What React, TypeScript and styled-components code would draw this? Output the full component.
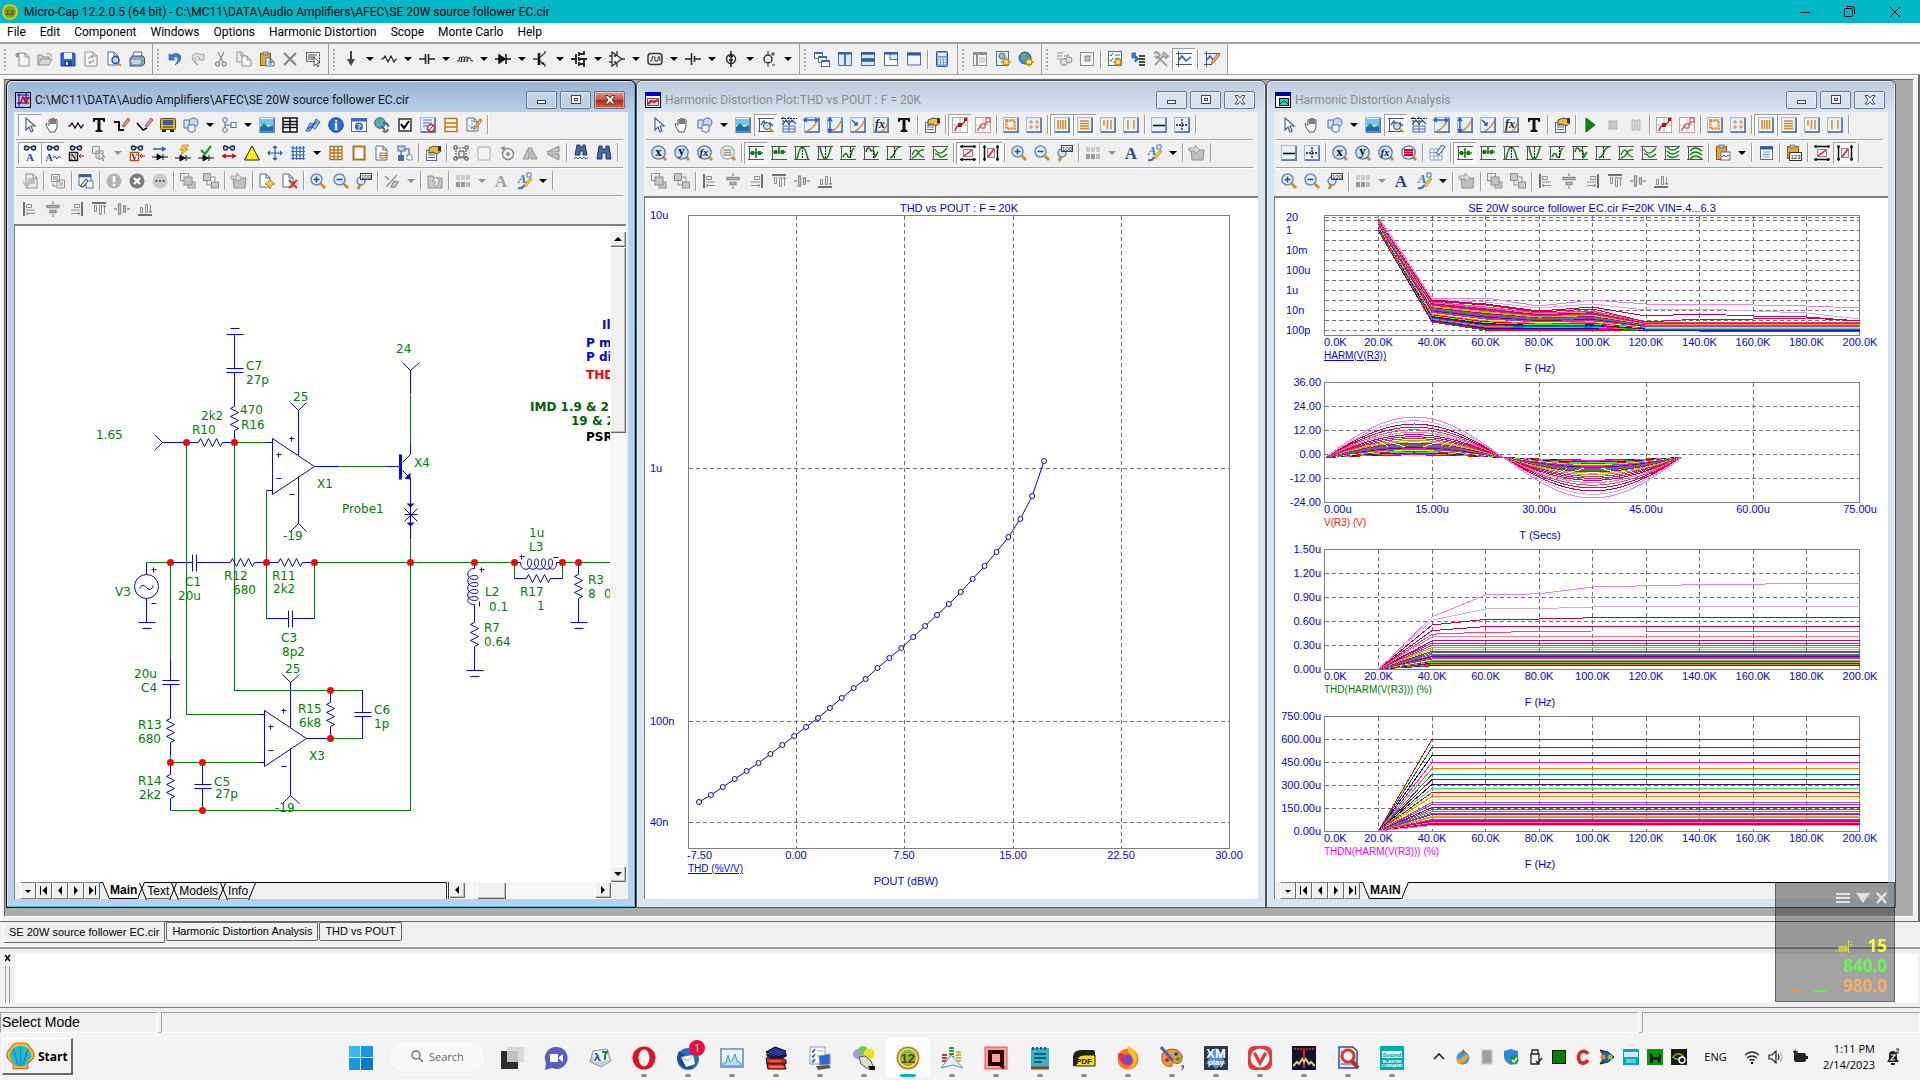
import React from "react";
import styled, { createGlobalStyle, css } from "styled-components";

const UI = 'Roboto, "Open Sans", sans-serif';
const TASK = '"Open Sans", "Noto Sans", sans-serif';
const ARIAL = '"Liberation Sans", Arial, sans-serif';
const TAHOMA = '"DejaVu Sans", Verdana, sans-serif';

const Global = createGlobalStyle`
  * { box-sizing: border-box; }
  html, body { margin: 0; height: 100%; overflow: hidden; }
  body { background: #f0f0f0; font-family: ${UI}; font-size: 12px; color: #000; }
  button { font: inherit; color: inherit; padding: 0; margin: 0; border: 0; background: none; }
  svg { display: block; flex: none; }
`;

/* ---------- toolbar glyphs, 16 x 16 ---------- */

const G = "#909090";
const B = "#4a6ea0";
const O = "#e08a1e";

const page = (x = 2, y = 1, w = 11, h = 14, c = B, f = "#fff") => (
  <path d={`M${x} ${y}h${w - 4}l4 4v${h - 4}h-${w}z M${x + w - 4} ${y}v4h4`} fill={f} stroke={c} />
);
const frame = (
  <>
    <rect x="0.5" y="0.5" width="15" height="15" fill="#e8f1fb" stroke="#9fb8d8" />
    <path d="M15 1v14H1" fill="none" stroke="#4a6a9a" strokeWidth="1.500" />
  </>
);
const tick = <path d="M0 1.500h16M0 14.500h16M1.500 1v14" stroke="#555" fill="none" />;
const glasses = (
  <g fill="none" stroke="#203050" strokeWidth="1.4">
    <circle cx="4.5" cy="3" r="2" fill="#c8d8f0" />
    <circle cx="11.5" cy="3" r="2" fill="#c8d8f0" />
    <path d="M6.5 2.5h3M2 2l2-1M14 2l-2-1" />
  </g>
);
const lens = (fill = "#cfe2f8", edge = "#5a7db0") => (
  <>
    <path d="M12 12l3 3" stroke="#d08a20" strokeWidth="3" />
    <circle cx="7.500" cy="7.500" r="6.700" fill={fill} stroke={edge} strokeWidth="1.300" />
  </>
);
const mid = (t: string, x: number, y: number, s: number, fill: string, extra = {}) => (
  <text x={x} y={y} fontSize={s} fill={fill} textAnchor="middle" fontFamily="Liberation Serif" fontWeight="bold" {...extra}>{t}</text>
);
const gear = (x: number, y: number) => (
  <g transform={`translate(${x} ${y})`}>
    <path d="M0-4.5V4.5M-4.5 0H4.5M-3-3L3 3M-3 3L3-3" stroke="#c89210" strokeWidth="2" />
    <circle r="3" fill="#f8cf40" stroke="#b98a10" />
    <circle r="1" fill="#fff" />
  </g>
);
const pen = <path d="M8 10l6-8 2 1.500-6 8-2.500 1z" fill="#f0b060" stroke="#a05020" strokeWidth=".8" />;
const zoomGlass = (d: string) => (
  <>
    <path d="M11 11l4 4" stroke="#d08a20" strokeWidth="3" />
    <circle cx="6.500" cy="6.500" r="5.500" fill="#e4effc" stroke="#6a8cbc" strokeWidth="1.500" />
    <path d={d} stroke="#24508c" strokeWidth="1.600" />
  </>
);

const glyphs: Record<string, React.ReactNode> = {
  new: <><path d="M1 4h5M3.500 1.500v5M2 2l3 4M5 2l-3 4" stroke={G} />{page(5, 2, 10, 13, G, "#f4f4f4")}</>,
  open: <><path d="M1 14V4h4l1 2h6v3" fill="#ccc" stroke={G} /><path d="M1 14l3-6h11l-3 6z" fill="#d8d8d8" stroke={G} /><path d="M9 3q3-2 5 1v2" fill="none" stroke={G} /></>,
  save: <><path d="M1 2h13l1 1v12H1z" fill="#3a66d8" stroke="#1c3c9c" /><rect x="4" y="2" width="8" height="6" fill="#eef4ff" /><rect x="4.500" y="10" width="7" height="5" fill="#1c3c9c" /><rect x="6" y="11" width="2" height="3" fill="#fff" /></>,
  revert: <>{page(2, 1, 12, 14, G, "#f6f6f6")}<path d="M5 8q1-3 5-2l-1-2M11 9q-1 3-5 2l1 2" stroke="#777" fill="none" /></>,
  preview: <>{page(2, 1, 10, 13)}<circle cx="9.500" cy="9" r="3.500" fill="#bcd8f8" stroke="#27508c" strokeWidth="1.500" /><path d="M12 12l3 3" stroke={O} strokeWidth="2" /></>,
  print: <><path d="M5 1h8l-1 6H3z" fill="#fff" stroke="#567" /><path d="M1 7l3-2h10l1.500 2v6l-3 2H1z" fill="#8ea4bd" stroke="#3b5270" /><path d="M2 10h10M3 12h8" stroke="#fff" /><rect x="12" y="9" width="2" height="2" fill="#30c030" /></>,
  undo: <path d="M2 3v6h6L6 7q4-3 5 1 0 3-3 6 6-3 6-8-2-6-10-2z" fill="#3f7ad0" stroke="#2558a8" strokeWidth=".6" />,
  redo: <path d="M14 3v6H8l2-2Q6 4 5 8q0 3 3 6-6-3-6-8 2-6 10-2z" fill="#e4e4e4" stroke={G} strokeWidth=".8" />,
  cut: <g stroke={G} fill="none" strokeWidth="1.300"><path d="M5 1l5 10M11 1L6 11" /><circle cx="4.500" cy="13" r="2" /><circle cx="11" cy="13" r="2" /></g>,
  copy: <>{page(1, 1, 8, 10, G, "#eee")}{page(6, 5, 9, 10, G, "#f6f6f6")}</>,
  paste: <><rect x="1.500" y="2.500" width="10" height="12" fill="#e0a83c" stroke="#8a5a10" /><rect x="4" y="1" width="5" height="3" fill="#bbb" stroke="#666" strokeWidth=".7" />{page(7, 7, 8, 8, B)}<path d="M9 11h4M9 13h4" stroke={B} /></>,
  del: <path d="M2 2l12 12M14 2L2 14" stroke="#858585" strokeWidth="2.200" />,
  selall: <><path d="M1.500 1.500h13v9h-13z" fill="none" stroke="#333" strokeDasharray="2 1" /><path d="M3 4h9M3 6h7M3 8h7" stroke="#555" /><path d="M9 6v9l2-2 2 3 1-1-2-3h3z" fill="#fff" stroke="#335" strokeWidth=".8" /></>,
  ground: <><path d="M8 0v10" stroke="#444" strokeWidth="2" /><path d="M4 8h8l-4 7z" fill="#444" /></>,
  res: <path d="M0 8h2l2-3 3 6 3-6 3 6 2-3h1" fill="none" stroke="#222" strokeWidth="1.200" />,
  cap: <path d="M0 8h6M10 8h6M6.500 3v10M9.500 3v10" stroke="#222" strokeWidth="1.600" />,
  ind: <path d="M0 10h2q0-5 2-4 2 1 0 5 0-6 3-5 2 1 0 5 0-6 3-5 2 1 0 5 0-6 3-4 1 1 1 3h2" fill="none" stroke="#222" />,
  diode: <path d="M0 8h16M4 4v8l6-4zM11 3v10" fill="#111" stroke="#111" strokeWidth="1.500" />,
  npn: <><path d="M0 8h6M6 7l6-5V0M6 9l6 5v2" fill="none" stroke="#444" strokeWidth="1.300" /><path d="M6 2v12" stroke="#111" strokeWidth="2.500" /><path d="M12 14l-4-1 2-2z" /></>,
  mos: <path d="M0 8h5M5 3v10M8 1v4M8 6v4M8 11v4M8 3h5V0M8 13h5v3M8 8h8M13 8v5" stroke="#222" fill="none" strokeWidth="1.800" />,
  opamp: <path d="M3 1v14l10-7zM0 5h3M0 11h3M13 8h3M8 0v4M8 12v4M5 5h2M6 4v2M5 11h2" fill="none" stroke="#333" strokeWidth="1.300" />,
  pulse: <><rect x="1" y="2.500" width="14" height="11" rx="3" fill="none" stroke="#333" strokeWidth="1.500" /><path d="M3 10h2V6h3v4h3V6h2v4" fill="none" stroke="#333" /></>,
  batt: <path d="M0 8h6M10 8h6M6.500 2v12M9.500 5v6" stroke="#222" strokeWidth="1.500" />,
  isrc: <><circle cx="8" cy="8" r="4.500" fill="none" stroke="#333" strokeWidth="1.500" /><path d="M8 0v16M6 6l2-2 2 2M6 9h4" stroke="#222" fill="none" strokeWidth="1.500" /></>,
  vdep: <><circle cx="7" cy="8" r="4" fill="none" stroke="#333" strokeWidth="1.500" /><path d="M7 0v4M7 12v4M12 1v4M10 3h4M11 14h3" stroke="#333" /></>,
  cascade: <>{[[0, 1], [4, 5], [7, 9]].map(([x, y]) => <g key={x}><rect x={x + .5} y={y + .5} width="8" height="6" fill="#fff" stroke={B} /><path d={`M${x} ${y + 1}h9`} stroke="#3868b8" strokeWidth="2" /></g>)}</>,
  tilev: <><path d="M1.500 1.500h6v13h-6zM8.500 1.500h6v13h-6z" fill="#dce9fa" stroke={B} /><path d="M1 2.500h14" stroke="#2a5cb0" strokeWidth="2" /></>,
  tileh: <><path d="M1.500 1.500h13v6h-13zM1.500 8.500h13v6h-13z" fill="#dce9fa" stroke={B} /><path d="M1 2.500h14M1 9.500h14" stroke="#2a5cb0" strokeWidth="2.500" /></>,
  overlap: <><path d="M1.500 1.500h13v13h-13z" fill="#fff" stroke={B} /><path d="M7 1.500h7.500v7H7z" fill="#dce9fa" stroke={B} /><path d="M1 2.500h14" stroke="#2a5cb0" strokeWidth="2" /></>,
  maxi: <><path d="M1.500 2h13v12h-13z" fill="#eef5ff" stroke={B} /><path d="M1 3h14" stroke="#2a5cb0" strokeWidth="3" /></>,
  calc: <><rect x="2.500" y=".5" width="11" height="15" rx="1" fill="#7ba0e0" stroke="#355a98" /><rect x="4" y="2" width="8" height="3" fill="#e8f2ff" /><path d="M4 7.500h8M4 10h8M4 12.500h8" stroke="#fff" strokeWidth="1.500" strokeDasharray="2 1" /></>,
  panel: <><rect x="1.500" y="1.500" width="13" height="13" fill="#f4f4f4" stroke={G} /><path d="M2 3h12M5 4v11" stroke={G} strokeWidth="2" /><path d="M7 7h6M7 9h6M7 11h6" stroke="#bbb" /></>,
  lockgear: <><rect x="1.500" y=".5" width="12" height="14" fill="#e4ecf8" stroke={B} /><circle cx="7" cy="5" r="3" fill="#9ab8e0" stroke={B} />{gear(11, 11)}</>,
  globegear: <><circle cx="7" cy="7" r="6" fill="#3c8cd8" stroke="#1f5a98" /><path d="M3 4q4-4 6 0l-2 4-3 1zM9 8h3l-2 4z" fill="#58b848" />{gear(11, 11)}</>,
  run1: <><path d="M1 2h6M1 5h5M1 8h4M8 5h5l-2-2" stroke={G} fill="none" /><circle cx="8" cy="11" r="3.500" fill="#ddd" stroke={G} /><circle cx="13" cy="9" r="3" fill="#ddd" stroke={G} /></>,
  run2: <><rect x="1.500" y="1.500" width="13" height="13" fill="#f6f6f6" stroke={G} /><rect x="6" y="5" width="5" height="5" fill="#bbb" stroke={G} /></>,
  checkgear: <><rect x="1.500" y=".5" width="13" height="14" fill="#fff" stroke={B} /><path d="M3 4l1 1 2-3M3 9l1 1 2-3M8 4h5M8 8h5" stroke="#2a5cb0" fill="none" />{gear(11, 11)}</>,
  step: <><path d="M6 2H2v5h4l-1-3 4 4-4 3V9" fill="#3f7ad0" stroke="#2558a8" strokeWidth=".8" /><path d="M9 5h6M9 8h6M9 11h6M9 14h6" stroke="#111" strokeWidth="1.300" /></>,
  tools: <g fill="none" stroke={G} strokeWidth="1.600"><path d="M5 6l9 9M10 5l-8 9" /><path d="M1 2l3-1 3 3-3 3-2-2M10 1l5 4-2 2-4-4" fill="#ddd" /></g>,
  plotwin: <><path d="M2.500 0v16M0 2.500h16M0 13.500h16" stroke="#555" /><path d="M3 9l3-4 4 5 5-4" fill="none" stroke="#2a5cd0" strokeWidth="1.600" /></>,
  plotedit: <><path d="M2.500 0v16M0 2.500h16M0 13.500h8" stroke="#555" /><path d="M3 9l3-4 4 5" fill="none" stroke="#2a5cd0" strokeWidth="1.600" />{pen}</>,
  arrow: <path d="M4 1v12l3-3 2 5 2-1-2-5h4z" fill="#fff" stroke="#45628c" strokeWidth="1.200" />,
  hand: <path d="M5 15l-3-5-1-3 1-.500 2 2V3q1-1 2 0v4-5q1-1 2 0v5-5q1-1 2 0v5-4q1-1 2 0v7l-2 5z" fill="#fff" stroke="#555" />,
  wave: <path d="M0 9h2l2-3 3 5 3-5 3 5 2-3h1" fill="none" stroke="#000" strokeWidth="1.200" />,
  T: <path d="M2 1h12v4h-1.500l-1-2H9.500v9.500l2 1V15H4.500v-1.500l2-1V3H4.500l-1 2H2z" fill="#111" />,
  wireo: <><path d="M0 5h5v8h5" fill="none" stroke="#111" strokeWidth="2" /><path d="M8 9l6-8 2 2-6 7z" fill="#f0a080" stroke="#803010" strokeWidth=".8" /></>,
  wired: <><path d="M0 6l6 7 4-2" fill="none" stroke="#111" strokeWidth="1.600" /><path d="M8 9l6-8 2 2-6 7z" fill="#f0a080" stroke="#803010" strokeWidth=".8" /></>,
  bus: <><rect x=".5" y="1.500" width="15" height="11" rx="1" fill="#e8ae20" stroke="#6b4a08" /><rect x="3" y="3" width="10" height="5" fill="#3a5a88" /><path d="M3 10h10" stroke="#333" /><path d="M2 13h4v2H2zM10 13h4v2h-4z" fill="#222" /></>,
  shapes: <><path d="M1 3h8v8H1z" fill="#d6e6fa" stroke={B} /><circle cx="10.500" cy="5.500" r="4.500" fill="#c2d8f6" stroke={B} /><path d="M5 8h7v6l-3 1.500-4-1.500z" fill="#eef5ff" stroke={B} /></>,
  tree: <><path d="M4 4v9M4 8h6M4 13h2" stroke={B} fill="none" /><circle cx="4" cy="3" r="2.300" fill="#fff" stroke={B} /><circle cx="4" cy="13" r="2.300" fill="#fff" stroke={B} /><rect x="10" y="5.500" width="5" height="5" fill="#fff" stroke={B} /></>,
  pic: <>{frame}<rect x="1" y="2" width="13" height="6" fill="#7ac0f4" /><path d="M1 10l4-4 4 4 5-2v6H1z" fill="#1f8a6a" /><path d="M1 11q6-2 13 0v3H1z" fill="#1c6cc0" /></>,
  tblk: <path d="M1 1h14v14H1zM1 4.500h14M1 7.500h14M1 10.500h14M8 1v14" fill="#fff" stroke="#111" strokeWidth="1.500" />,
  link: <><path d="M1 14l4-8 4 1-4 7zM7 10l4-8 4 3-5 7z" fill="#9cc0f0" stroke="#2a5cb0" /><path d="M3 12l9-7" stroke="#2a5cb0" strokeWidth="1.500" /></>,
  info: <><circle cx="8" cy="8" r="7.300" fill="#2a6ad4" stroke="#174a9c" />{mid("i", 8, 13, 14, "#fff")}</>,
  help: <><rect x=".5" y="1.500" width="15" height="13" fill="#fff" stroke={B} /><path d="M0 3h16" stroke="#3a6fc8" strokeWidth="3" /><circle cx="8" cy="9.500" r="4" fill="#2a6ad4" />{mid("?", 8, 12.500, 9, "#fff")}</>,
  web: <><circle cx="6" cy="6" r="5.300" fill="#58a8e8" stroke="#2a6098" /><path d="M3 3q4-3 5 1l-3 4z" fill="#58b848" /><path d="M7 9l4 4M9 7a3 3 0 015 3M14 12a3 3 0 01-5 2" fill="none" stroke="#4a6a6a" strokeWidth="2" /></>,
  check: <><rect x="2" y="2" width="12" height="12" fill="#fff" stroke="#333" strokeWidth="1.500" /><path d="M4 7l3 4 5-7" fill="none" stroke="#000" strokeWidth="2" /></>,
  listno: <>{frame}<path d="M3 3h9M3 6h9M3 9h4" stroke={B} /><circle cx="11" cy="11" r="3.500" fill="#fff" stroke="#d02020" strokeWidth="1.500" /><path d="M9 13l4-4" stroke="#d02020" /></>,
  rows: <path d="M2 1.500h12v13H2zM2 6h12M2 10h12" fill="#fff8ec" stroke="#c07818" strokeWidth="1.500" />,
  pagepen: <>{page(1, 1, 11, 13)}<path d="M6 3v8M3 8l3 4 3-4" fill="none" stroke="#3a6fc8" strokeDasharray="2 1" />{pen}</>,
  specA: <>{glasses}{mid("A", 8, 15.500, 11, "#2348a0")}</>,
  specW: <>{glasses}{mid("A", 4, 15.500, 10, "#2348a0")}<path d="M8 13l2-2 2 3 2-3 2 2" fill="none" stroke="#2348a0" /></>,
  specN: <>{glasses}<rect x="1.500" y="7.500" width="8" height="8" fill="#fff" stroke="#111" strokeWidth="1.400" />{mid("N", 5.500, 14.500, 8, "#111")}<path d="M11 11h5M11 11l2-2M11 11l2 2" stroke="#d00" /></>,
  specV: <>{glasses}<rect x="1.500" y="7.500" width="8" height="8" fill="#fff" stroke="#d04000" strokeWidth="1.400" />{mid("V", 5.500, 14.500, 8, "#111")}<path d="M11 11h5M11 11l2-2M11 11l2 2" stroke="#d00" /></>,
  copycond: <><path d="M1.500 1.500h7v7h-7zM5 6h7v7H5z" fill="#e8e8e8" stroke={G} /><path d="M8 7v8l2-2 2 3 1-1-2-3h3z" fill="#eee" stroke={G} /></>,
  curr: <><path d="M1 4h12M10 2l3 2-3 2" stroke="#2a5cb0" fill="none" strokeWidth="1.500" /><path d="M0 12h16M5 9v6l5-3zM11 9v6" fill="#111" stroke="#111" /></>,
  power: <><path d="M8 0l6 0-4 4h3l-7 6 2-5H5z" fill="#f8c830" stroke="#b08010" strokeWidth=".7" /><path d="M0 13h16M5 10v6l5-3zM11 10v6" fill="#111" stroke="#111" /></>,
  ok: <><path d="M3 5l4 4 6-8" fill="none" stroke="#18a028" strokeWidth="2.200" /><path d="M0 13h16M5 10v6l5-3zM11 10v6" fill="#111" stroke="#111" /></>,
  pinconn: <>{glasses}<path d="M1 11h14M5 9l-3 2 3 2M11 9l3 2-3 2" fill="none" stroke="#d00018" strokeWidth="1.500" /></>,
  warn: <path d="M8 1l7.500 14H.5z" fill="#ffee00" stroke="#222" />,
  cross4: <path d="M8 1v14M1 8h14M6 3l2-2 2 2M6 13l2 2 2-2M3 6L1 8l2 2M13 6l2 2-2 2" fill="none" stroke="#2f5a98" strokeWidth="1.200" />,
  grid: <path d="M3 1v14M6.500 1v14M10 1v14M13.500 1v14M1 3h14M1 6.500h14M1 10h14M1 13.500h14" stroke="#2f6ac8" strokeWidth="1.200" />,
  table: <path d="M2 1.500h12v13H2zM2 5h12M2 8h12M2 11.500h12M6 1.500v13M10 1.500v13" fill="#fff" stroke="#b87018" strokeWidth="1.300" />,
  pageo: <path d="M2.500 1.500h11v13h-11z" fill="#fff" stroke="#b87018" strokeWidth="2" />,
  pageb: <>{page(2, 1, 11, 14)}<path d="M6 8h6v5H6zM6 10.500h6" fill="#fff4e0" stroke="#b87018" /></>,
  schem: <><path d="M4 4v8M4 4h8v8" fill="none" stroke="#5a86cc" strokeWidth="1.500" /><rect x="1" y="1" width="7" height="5" fill="#b8d0f4" stroke={B} /><rect x="1.500" y="10.500" width="5" height="5" fill="#3a6fc8" stroke={B} /><rect x="10" y="10" width="5" height="5" fill="#fff" stroke={B} strokeDasharray="2 1" /></>,
  prop: <><rect x="1.500" y="5.500" width="10" height="10" fill="#fff" stroke={B} /><path d="M3 8h7M3 10h7M3 12.500h7" stroke={B} /><path d="M4 3l5-2 5 1 2 4-4 3-4-2-4 1z" fill="#e8b848" stroke="#6b4a08" /><path d="M13 1h3v5h-3z" fill="#333" /></>,
  group: <><path d="M3 3h10v10H3z" fill="none" stroke="#444" strokeDasharray="2 1" /><path d="M1 1h3v3H1zM12 1h3v3h-3zM1 12h3v3H1zM12 12h3v3h-3zM6 6h5v6H6z" fill="#eee" stroke="#444" /></>,
  rrect: <rect x="2" y="2" width="12" height="13" rx="2" fill="#f2f2f2" stroke="#c0c0c0" strokeWidth="1.500" />,
  rot: <><circle cx="9" cy="9" r="5.500" fill="none" stroke={G} strokeWidth="1.600" /><circle cx="9" cy="9" r="2" fill={G} /><path d="M1 3l5-2v5z" fill={G} /></>,
  flipx: <path d="M7 2v12H1zM9 2v12h6z" fill="#c4c4c4" stroke={G} />,
  flipy: <path d="M14 7H2l12-6zM14 9H2l12 6z" fill="#c4c4c4" stroke={G} />,
  bino: <path d="M3 1h3v3h4V1h3l2 13h-5V8H6v6H1z" fill="#4868a8" stroke="#1c3468" />,
  binow: <><path d="M4 0h3v2h3V0h2l2 10h-4V6H7v4H2z" fill="#4868a8" stroke="#1c3468" /><path d="M1 14l2-2 2 2 2-2 2 2 2-2 2 2 2-2" fill="none" stroke="#2a5cd0" /></>,
  filefwd: <>{page(4, 1, 11, 14, G, "#eee")}<path d="M6 6h7M6 8h7M6 10h7" stroke={G} /><path d="M1 6q0 5 4 5V9l3 3-3 3v-2Q0 13 1 6z" fill="#bbb" /></>,
  copy2: <><path d="M1.500 1.500h8v7h-8zM7 7h7.500v8H7z" fill="#eee" stroke={G} /><path d="M3 4h5M3 6h5M9 10h4M9 12h4M3 10v3h3" stroke={G} fill="none" /></>,
  editpage: <><rect x="1" y="1.500" width="12" height="11" fill="#fff" stroke={B} /><path d="M1 3h12" stroke="#2a5cb0" strokeWidth="2.500" /><path d="M8 8h7v7H8z" fill="#fff" stroke={B} /><path d="M3 12l5-6 2 2-5 6H3z" fill="#eea" stroke="#236" /></>,
  bang: <><circle cx="8" cy="8" r="7.500" fill="#b4b4b4" /><path d="M8 3v6" stroke="#fff" strokeWidth="2.500" /><circle cx="8" cy="12" r="1.400" fill="#fff" /></>,
  xcirc: <><circle cx="8" cy="8" r="7.500" fill="#7c7c7c" /><path d="M5 5l6 6M11 5l-6 6" stroke="#fff" strokeWidth="2.300" /></>,
  dots: <><circle cx="8" cy="8" r="7.500" fill="#cacaca" /><path d="M3.500 8h9" stroke="#666" strokeWidth="2" strokeDasharray="2 1.500" /></>,
  front: <><rect x=".5" y=".5" width="8" height="7" fill="#ececec" stroke={G} /><rect x="8" y="9" width="7" height="6" fill="#ccc" stroke={G} /><rect x="4" y="4" width="8" height="8" fill="#c4c4c4" stroke={G} /></>,
  back: <><rect x="4" y="4" width="8" height="8" fill="#ececec" stroke={G} /><rect x=".5" y=".5" width="7" height="7" fill="#c8c8c8" stroke={G} /><rect x="8.500" y="9" width="7" height="6" fill="#c8c8c8" stroke={G} /></>,
  goto: <><path d="M2 5h13l-1 10H3z" fill="#c0c0c0" stroke={G} /><path d="M0 3h6V0l5 5-5 4V6H0z" fill="#ddd" stroke={G} strokeWidth=".8" /></>,
  pageadd: <>{page(1, 1, 10, 13)}<path d="M11 6l2 3 3 2-3 1-2 4-2-4-3-1 3-2z" fill="#f8c830" stroke="#a87a10" strokeWidth=".8" /></>,
  pagedel: <>{page(1, 1, 10, 13)}<path d="M7 7l8 8M15 7l-8 8" stroke="#e03018" strokeWidth="2" /></>,
  zin: zoomGlass("M6.500 3.500v6M3.500 6.500h6"),
  zout: zoomGlass("M3.500 6.500h6"),
  z100: <><circle cx="5" cy="8" r="4" fill="#d8e8fa" stroke="#5a7db0" strokeWidth="1.300" /><path d="M4 12l-2 4" stroke="#d08a20" strokeWidth="3" /><rect x="4.500" y=".5" width="11" height="6" fill="#fff" stroke="#345" /><text x="10" y="5.500" fontSize="6" textAnchor="middle" fontFamily="Liberation Sans">100</text></>,
  slash: <path d="M1 3l4 4M2 14L13 2M7 14l3-6 4 1-3 5z" fill="#ccc" stroke={G} strokeWidth="1.300" />,
  up: <><path d="M1 3h5l1 2h8v10H1z" fill="#c8c8c8" stroke={G} /><path d="M8 13V8H5l4-4 4 4h-2v5z" fill="#f4f4f4" stroke={G} strokeWidth=".8" /></>,
  cgrid: <><path d="M1 2h4v5H1zM6 2h4v5H6zM11 2h4v5h-4z" fill="#ccc" /><path d="M1 9h4v5H1zM6 9h4v5H6z" fill="#999" /><path d="M11 9h4v5h-4z" fill="#bbb" /></>,
  A: mid("A", 8, 14, 17, "#27478c"),
  Ag: mid("A", 8, 14, 17, "#a0a0a0"),
  Ab: <>{mid("A", 6, 10, 13, "#3a6fd0", { fontStyle: "italic" })}<path d="M11 0h4v4h-4z" fill="#fff" stroke="#3a6fd0" /><path d="M14 5l2 1-6 8-2-2z" fill="#f8c830" stroke="#a87a10" strokeWidth=".7" /><path d="M2 15q5 1 6-3" stroke="#3a6fd0" strokeWidth="2" fill="none" /></>,
  al1: <><path d="M2 1v14" stroke="#707070" strokeWidth="2" /><path d="M4.500 3.500h5v3h-5zM4 9h9M5 12.500h8M6 11l-2 1.500 2 1.500" fill="none" stroke={G} /></>,
  al2: <path d="M8 0v3M8 13v3M2 4.500h12v2H2zM5 9.500h6v2H5z" fill="#ddd" stroke={G} strokeWidth="1.300" />,
  al3: <><path d="M14 1v14" stroke="#707070" strokeWidth="2" /><path d="M6.500 3.500h5v3h-5zM3 9h9M3 12.500h8M10 11l2 1.500-2 1.500" fill="none" stroke={G} /></>,
  al4: <><path d="M1 2h14" stroke="#707070" strokeWidth="2" /><path d="M3.500 4.500h2v6h-2zM8.500 4.500h2v9h-2zM13.500 4v9M12 6l1.500-2L15 6" fill="none" stroke={G} /></>,
  al5: <path d="M0 8h3M13 8h3M4.500 3v10h2V3zM9.500 5v6h2V5z" fill="#ddd" stroke={G} strokeWidth="1.300" />,
  al6: <><path d="M1 14h14" stroke="#707070" strokeWidth="2" /><path d="M3.500 6.500h2v5h-2zM8.500 3.500h2v8h-2zM13.500 4v8M12 10l1.500 2L15 10" fill="none" stroke={G} /></>,
  peak: <>{tick}<path d="M3 8l3-4 3 5 3-3 3 3" fill="none" stroke="#2a5cb0" strokeWidth="1.400" /><circle cx="9" cy="9" r="3.500" fill="#cfe2f8cc" stroke="#345" /><path d="M12 12l3 3" stroke={O} strokeWidth="2" /></>,
  cursor: <><path d="M0 1.500h16M2 0v8M8 0v9" stroke="#111" strokeDasharray="2 1" /><path d="M2 7l3-4 3 4 3-4 4 4" fill="none" stroke="#2a5cb0" strokeWidth="1.300" /><path d="M2 9h12v6H2zM2 12h12M8 9v6" fill="#e8f1fb" stroke={B} /></>,
  hor: <>{frame}<path d="M3 14Q10 11 13 4" stroke={O} fill="none" strokeWidth="1.500" /><path d="M0 3h14M3 1L0 3l3 2M11 1l3 2-3 2" stroke="#2a5cd0" fill="none" strokeWidth="1.500" /></>,
  vert: <>{frame}<path d="M5 14Q11 11 14 4" stroke={O} fill="none" strokeWidth="1.500" /><path d="M3 1v14M1 4l2-3 2 3M1 12l2 3 2-3" stroke="#2a5cd0" fill="none" strokeWidth="1.500" /></>,
  pan: <>{frame}<path d="M5 14Q11 11 14 4" stroke={O} fill="none" strokeWidth="1.500" /><path d="M2 3l5 5M7 5v3H4" stroke="#2a5cd0" fill="none" strokeWidth="1.500" /></>,
  fx: <>{frame}<path d="M9 14q4-2 5-8" stroke={O} fill="none" strokeWidth="1.500" />{mid("fx", 7, 11, 12, "#222", { fontStyle: "italic" })}</>,
  tok1: <><rect x=".5" y=".5" width="15" height="15" fill="#fff" stroke="#c0a0a0" /><path d="M0 8h16M8 0v16" stroke="#aaa" /><path d="M3 14q1-5 5-6 5-2 6-6" stroke="#c02828" fill="none" strokeWidth="1.500" /><path d="M6 6h4v4H6zM12 1h3v3h-3z" fill="#a01818" /></>,
  tok2: <><rect x=".5" y=".5" width="15" height="15" fill="#fff" stroke="#c0a0a0" /><path d="M0 8h16M8 0v16" stroke="#bbb" /><path d="M3 14q1-5 5-6 5-2 6-6" stroke="#c86060" fill="none" strokeWidth="1.500" /><path d="M6 7h4v4H6zM11 1h4v4h-4z" fill="#fff" stroke="#c04040" /></>,
  dots1: <>{frame}<rect x="3.500" y="3.500" width="8" height="8" fill="#fff" stroke="#f08010" strokeWidth="2.500" strokeDasharray="2 1" /></>,
  dots2: <>{frame}<path d="M3 5h4M9 5h4M5 3v4M11 3v4M3 10h4M9 10h4M5 8v4M11 8v4" stroke={O} /></>,
  v1: <>{frame}<path d="M4 3v9M6.500 3v9M9 3v9M11.500 3v9" stroke={O} strokeWidth="1.500" /></>,
  h1: <>{frame}<path d="M3 4h9M3 6.500h9M3 9h9M3 11.500h9" stroke={O} strokeWidth="1.500" /></>,
  v2: <>{frame}<path d="M4 3v6M7.500 3v9M11 3v9" stroke={O} strokeWidth="1.500" /></>,
  v3: <>{frame}<path d="M5 3v9M11 3v9" stroke={O} strokeWidth="1.500" /></>,
  hl: <>{frame}<path d="M2 8.500h12" stroke="#111" strokeWidth="1.600" /></>,
  cr: <>{frame}<path d="M2 8h12M8 2v12" stroke="#111" strokeWidth="1.300" strokeDasharray="2 1" /></>,
  lx: <>{lens()}{mid("x", 7.500, 11, 13, "#111")}</>,
  ly: <>{lens()}{mid("y", 7.500, 10, 13, "#111")}</>,
  lf: <>{lens()}{mid("fx", 7, 11, 10, "#111", { fontStyle: "italic" })}</>,
  lg: <>{lens("#eee", "#aaa")}<path d="M3.500 5h8M3.500 7.500h8M3.500 10h8" stroke="#999" strokeWidth="1.500" /></>,
  lr: <>{lens("#e4ecfa")}<path d="M3 5h9M3 7.500h9M3 10h9" stroke="#d00030" strokeWidth="1.800" /></>,
  m0: <>{tick}<path d="M1 8h14M8 3v10" stroke="#0c8010" strokeWidth="1.600" /><path d="M3 6h3v4H3zM10 6h3v4h-3z" fill="#0c8010" /></>,
  m1: <>{tick}<path d="M1 7h14M8 1v8" stroke="#0c8010" strokeWidth="1.600" /><path d="M3 5h3v4H3zM10 5h3v4h-3z" fill="#0c8010" /></>,
  m2: <>{tick}<path d="M3 14Q8-10 14 14" fill="none" stroke="#0c8010" strokeWidth="1.500" /><path d="M8.500 2v12" stroke="#111" strokeDasharray="2 1" /></>,
  m3: <>{tick}<path d="M3 2Q8 26 14 2" fill="none" stroke="#0c8010" strokeWidth="1.500" /><path d="M8.500 2v12" stroke="#111" strokeDasharray="2 1" /></>,
  m4: <>{tick}<path d="M3 12q3-7 5 0 3 2 4-7l2-2" fill="none" stroke="#0c8010" strokeWidth="1.500" /><path d="M10.500 2v12" stroke="#111" strokeDasharray="2 1" /></>,
  m5: <>{tick}<path d="M3 7q2-8 5-1 3-3 4 6l3-5" fill="none" stroke="#0c8010" strokeWidth="1.500" /><path d="M10.500 2v12" stroke="#111" strokeDasharray="2 1" /></>,
  m6: <>{tick}<path d="M4 13Q8 11 9 7t5-5" fill="none" stroke="#0c8010" strokeWidth="1.500" /><path d="M8.500 2v12" stroke="#111" strokeDasharray="2 1" /></>,
  m7: <>{tick}<path d="M3 10q3-8 6-3t6 5M3 13q4-1 6-5t6-3" fill="none" stroke="#0c8010" strokeWidth="1.300" /></>,
  m8: <>{tick}<path d="M3 4q3 5 6 4t6-5M3 9q3-1 5 3 3 1 7-3" fill="none" stroke="#0c8010" strokeWidth="1.300" /></>,
  m9: <>{tick}<path d="M3 2q5 6 12 0M3 6q5 6 12 0M3 10q5 5 12 0" fill="none" stroke="#0c8010" strokeWidth="1.300" /></>,
  m10: <>{tick}<path d="M3 6q5-6 12 0M3 10q5-6 12 0M3 14q5-6 12 0" fill="none" stroke="#0c8010" strokeWidth="1.300" /></>,
  e1: <><path d="M0 1.500h16M0 14.500h16M2 0v3M14 0v3M2 13v3M14 13v3" stroke="#111" strokeWidth="1.500" /><rect x="3.500" y="4.500" width="9" height="7" fill="#eef" stroke="#88a" /><path d="M4 11l8-6" stroke="#e02020" strokeWidth="1.500" /></>,
  e2: <><path d="M1.500 0v16M14.500 0v16M0 2h3M13 2h3M0 14h3M13 14h3" stroke="#111" strokeWidth="1.500" /><rect x="4.500" y="3.500" width="7" height="9" fill="#eef" stroke="#88a" /><path d="M5 12l6-8" stroke="#e02020" strokeWidth="1.500" /></>,
  tpen: <><path d="M1 4h12v11H1zM1 7.500h12M1 11h12M5 4v11M9 4v11" fill="#fff" stroke="#86a4d0" /><path d="M7 8l6-8 3 2-6 8z" fill="#d8e4f4" stroke="#456" /></>,
  play: <path d="M4 1l9 7-9 7z" fill="#0c8a10" stroke="#0a600c" />,
  stop: <rect x="4" y="4" width="8" height="8" fill="#c8c8c8" stroke="#b0b0b0" />,
  pause: <path d="M4 3h3v10H4zM9 3h3v10H9z" fill="#ddd" stroke="#b0b0b0" />,
  pastew: <><rect x="1.500" y="1.500" width="10" height="13" fill="#e0a83c" stroke="#8a5a10" /><rect x="4" y="0" width="5" height="3" fill="#bbb" stroke="#666" strokeWidth=".7" /><rect x="6" y="7" width="9" height="8" fill="#fff" stroke={B} /><path d="M7 12l2-2 2 2 2-2 1 1" stroke="#d02020" fill="none" /></>,
  paste3: <><rect x="1.500" y="1.500" width="11" height="12" fill="#e0a83c" stroke="#8a5a10" /><rect x="4" y="0" width="5" height="3" fill="#bbb" stroke="#666" strokeWidth=".7" /><rect x="3.500" y="7.500" width="12" height="8" fill="#fff" stroke="#333" /><text x="9.500" y="14" fontSize="6" textAnchor="middle" fontFamily="Liberation Sans">123</text></>,
  win: <><rect x="2.500" y="1.500" width="12" height="13" fill="#fff" stroke={B} /><path d="M2 3h13" stroke="#2a5cb0" strokeWidth="3" /><path d="M5 7h7M5 9.500h7M5 12h7" stroke="#6a94d8" /></>,
};

const GlyphSvg = styled.svg`
  width: 16px;
  height: 16px;
  overflow: visible;
`;
const Glyph = ({ name }: { name: string }) => (
  <GlyphSvg viewBox="0 0 16 16" fill="none" aria-hidden="true">
    <g fill="#000">{glyphs[name]}</g>
  </GlyphSvg>
);

/* ---------- toolbars ---------- */

const Strip = styled.div<{ $pad?: number }>`
  display: flex;
  align-items: center;
  height: 28px;
  padding: 0 0 2px ${(p) => p.$pad ?? 1}px;
`;
const Tool = styled.button<{ $down?: boolean }>`
  width: 23px;
  height: 22px;
  flex: none;
  display: grid;
  place-items: center;
  ${(p) => p.$down && css`
    background: #f8f8f8;
    box-shadow: inset 1px 1px #a0a0a0, inset -1px -1px #fff;
  `}
`;
const Drop = styled.button<{ $off?: boolean }>`
  width: 15px;
  height: 22px;
  flex: none;
  display: grid;
  place-items: center;
  &::after {
    content: "";
    border: 4px solid transparent;
    border-top-color: ${(p) => (p.$off ? "#909090" : "#000")};
    border-bottom: 0;
  }
`;
const Divider = styled.span`
  flex: none;
  width: 5px;
  height: 19px;
  border-left: 2px solid transparent;
  background: linear-gradient(90deg, #a0a0a0 1px, #fff 1px, #fff 2px, transparent 2px) no-repeat;
`;

/* "name" draws a tool, "name*" a pressed one, "v" and "-" a live and a disabled drop arrow, "|" a divider */
const Tools = ({ items }: { items: string }) => (
  <>
    {items.split(" ").map((t, i) => {
      if (t === "|") return <Divider key={i} />;
      if (t === "v" || t === "-") return <Drop key={i} $off={t === "-"} aria-label="More" />;
      const down = t.endsWith("*");
      const name = down ? t.slice(0, -1) : t;
      return <Tool key={i} $down={down} aria-label={name}><Glyph name={name} /></Tool>;
    })}
  </>
);

/* ---------- application shell ---------- */

const Shell = styled.div`
  display: flex;
  flex-direction: column;
  height: 100vh;
  min-height: 600px;
`;
const AppTitle = styled.header`
  display: flex;
  align-items: center;
  height: 23px;
  flex: none;
  padding-left: 2px;
  background: #00b7c7;
  h1 { flex: 1; margin: 0 0 0 6px; font-size: 12px; font-weight: 400; }
`;
const SysButton = styled.button`
  width: 45px;
  height: 20px;
  display: grid;
  place-items: center;
  &:last-child { margin-right: 3px; }
`;
const MenuBar = styled.nav`
  display: flex;
  height: 21px;
  flex: none;
  background: #fff;
  border-bottom: 2px solid #a0a0a0;
  button { padding: 0 7px; font-size: 12px; line-height: 19px; }
`;
const Rebar = styled.div`
  display: flex;
  height: 31px;
  flex: none;
  background: #fff;
  border-bottom: 1px solid #a0a0a0;
`;
const Band = styled.div`
  display: flex;
  align-items: center;
  padding: 0 4px 0 2px;
  background: #f0f0f0;
  border-right: 1px solid #a0a0a0;
  &::before {
    content: "";
    width: 8px;
    height: 22px;
    background: radial-gradient(circle, #a8a8a8 1px, transparent 1px) 0 0 / 6px 4px repeat-y;
  }
`;
const Outer = styled.main`
  flex: 1;
  min-height: 0;
  padding: 4px;
  display: flex;
  border-right: 2px solid #696969;
  border-bottom: 1px solid #696969;
  box-shadow: inset 2px 2px #fff;
  background: #f0f0f0;
`;
const Mdi = styled.div`
  flex: 1;
  min-width: 0;
  display: grid;
  grid-template-columns: repeat(3, minmax(0, 1fr));
  padding: 0 17px 8px 1px;
  background: #ababab;
  border: 1px solid #696969;
  border-right-color: #fff;
  border-bottom-color: #fff;
`;
const Win = styled.section<{ $active?: boolean }>`
  display: flex;
  flex-direction: column;
  min-width: 0;
  min-height: 0;
  padding: 0 7px 8px;
  border: 1px solid ${(p) => (p.$active ? "#000" : "#505050")};
  border-radius: 6px 6px 0 0;
  background: ${(p) => (p.$active ? "linear-gradient(#98b4d2, #b9d1ea 32px)" : "linear-gradient(#bccbdb, #d7e4f2 32px)")};
  box-shadow: inset -1px -1px ${(p) => (p.$active ? "#38c4e4" : "#e8f0f8")}, inset 1px 1px #e4eef8;
`;
const WinTitle = styled.header<{ $active?: boolean }>`
  display: flex;
  align-items: center;
  gap: 4px;
  height: 31px;
  flex: none;
  padding: 6px 3px 0 1px;
  color: ${(p) => (p.$active ? "#101820" : "#8c8c8c")};
  h2 { flex: 1; margin: 0; font-size: 12px; font-weight: 400; white-space: nowrap; overflow: hidden; }
`;
const Caption = styled.button<{ $close?: boolean }>`
  width: 31px;
  height: 18px;
  flex: none;
  display: grid;
  place-items: center;
  border: 1px solid #66788e;
  border-radius: 2px;
  margin-left: -1px;
  background: ${(p) => (p.$close ? "linear-gradient(#e0a090, #c85040 48%, #b02818 52%, #d06848)" : "linear-gradient(#ffffff60, #ffffff10)")};
  box-shadow: inset 0 0 0 1px #ffffff70;
`;
const Client = styled.div`
  flex: 1;
  min-height: 0;
  display: flex;
  flex-direction: column;
  background: #f0f0f0;
`;
const Bars = styled.div`
  display: flex;
  flex-direction: column;
  padding: 0 5px 0 2px;
  ${Strip} { border-bottom: 1px solid #a0a0a0; box-shadow: 0 1px #fff; }
  ${Strip}:last-child { border: 0; box-shadow: none; }
`;
const View = styled.div<{ $edge?: boolean }>`
  flex: 1;
  min-height: 0;
  display: flex;
  margin-right: ${(p) => (p.$edge ? 2 : 0)}px;
  background: #fff;
  border-top: 2px solid #808080;
  border-left: 1px solid #808080;
`;
const Canvas = styled.svg`
  flex: 1;
  min-width: 0;
  height: 100%;
`;

const captionShapes = {
  min: <rect x="2.500" y="6.500" width="8" height="3" fill="#fff" stroke="#445" />,
  max: <><rect x="2.500" y="1.500" width="9" height="8" fill="#fff" stroke="#445" /><rect x="5.500" y="4.500" width="3" height="2" fill="#fff" stroke="#445" /></>,
  close: <path d="M2 1.500h3l2 2.500 2-2.500h3L9 6l3 4H9L7 7.500 5 10H2l3-4z" fill="#fff" stroke="#445" />,
};

const MdiWindow = ({ title, active, icon, bars, pad, children }: {
  title: string; active?: boolean; icon: React.ReactNode; bars: string[]; pad?: number; children: React.ReactNode;
}) => (
  <Win $active={active}>
    <WinTitle $active={active}>
      {icon}
      <h2>{title}</h2>
      <Caption aria-label="Minimize"><svg width="14" height="12">{captionShapes.min}</svg></Caption>
      <Caption aria-label="Maximize"><svg width="14" height="12">{captionShapes.max}</svg></Caption>
      <Caption $close={active} aria-label="Close"><svg width="14" height="12">{captionShapes.close}</svg></Caption>
    </WinTitle>
    <Client>
      <Bars>{bars.map((b, i) => <Strip key={i} $pad={pad}><Tools items={b} /></Strip>)}</Bars>
      {children}
    </Client>
  </Win>
);

/* ---------- page tabs and scroll bars ---------- */

const raised = css`
  background: #f0f0f0;
  box-shadow: inset 1px 1px #fff, inset -1px -1px #696969, inset -2px -2px #c0c0c0;
`;
const PageBar = styled.div`
  display: flex;
  align-items: stretch;
  height: 17px;
  flex: none;
  padding-left: 5px;
  border-left: 1px solid #808080;
`;
const Nav = styled.button`
  width: 16px;
  flex: none;
  display: grid;
  place-items: center;
  border: 1px solid #808080;
  border-left-color: #fff;
  border-right-color: #696969;
  background: #f0f0f0;
`;
const PageTabs = styled.div`
  flex: 1;
  display: flex;
  border-top: 1px solid #000;
  padding-left: 2px;
`;
const PageTab = styled.button<{ $on?: boolean }>`
  display: flex;
  align-items: stretch;
  margin-right: -6px;
  margin-top: ${(p) => (p.$on ? -1 : 0)}px;
  font: ${(p) => (p.$on ? "bold" : "normal")} 12px/16px ${ARIAL};
  span { background: ${(p) => (p.$on ? "#fff" : "transparent")}; border-bottom: 1px solid ${(p) => (p.$on ? "#000" : "#696969")}; }
`;
const Slant = ({ flip, on }: { flip?: boolean; on?: boolean }) => (
  <svg width="8" height="17" viewBox="0 0 8 17">
    <path d={flip ? "M8 0L1 17H0V0z" : "M0 0l7 17h1V0z"} fill={on ? "#fff" : "none"} />
    <path d={flip ? "M7.500 0L0.500 17" : "M.5 0l7 17"} stroke="#000" />
  </svg>
);
const navs = ["M3 5h6l-3 3z", "M2 1h1v9h-1zM9 1v9L4.500 5.500z", "M8 1v9L4 5.500z", "M4 1v9l4-4.500z", "M9 1h1v9h-1zM3 1v9l4.500-4.500z"];
const Pages = ({ names, children }: { names: string[]; children?: React.ReactNode }) => (
  <PageBar>
    {navs.map((d, i) => <Nav key={i} aria-label={`Page control ${i + 1}`}><svg width="12" height="12"><path d={d} /></svg></Nav>)}
    <PageTabs>
      {names.map((n, i) => <PageTab key={n} $on={i === 0}><Slant on={i === 0} /><span>{n}</span><Slant flip on={i === 0} /></PageTab>)}
    </PageTabs>
    {children}
  </PageBar>
);

const dither = css`
  background: repeating-conic-gradient(#fff 0 25%, #f0f0f0 0 50%) 0 0 / 2px 2px;
`;
const VScroll = styled.div`
  width: 16px;
  flex: none;
  display: flex;
  flex-direction: column;
  padding-top: 5px;
  ${dither}
`;
const HScroll = styled.div`
  width: 165px;
  flex: none;
  display: flex;
  margin-right: 17px;
  border-left: 3px double #333;
  ${dither}
`;
const ScrollKey = styled.button`
  width: 16px;
  height: 16px;
  flex: none;
  display: grid;
  place-items: center;
  ${raised}
`;
const VThumb = styled.div`
  height: 186px;
  ${raised}
`;
const HThumb = styled.div`
  width: 29px;
  margin-left: 12px;
  ${raised}
`;
const Grow = styled.div` flex: 1; `;
const Key = ({ d, label }: { d: string; label: string }) => (
  <ScrollKey aria-label={label}><svg width="8" height="8"><path d={d} /></svg></ScrollKey>
);

/* ---------- schematic ---------- */

const GREEN = "#008000";
const BLUE = "#0000ff";
const zigH = (x: number, y: number) => `M${x} ${y}l2-4 4 8 4-8 4 8 4-8 4 8 2-4`;
const zigV = (x: number, y: number) => `M${x} ${y}l-4 2 8 4-8 4 8 4-8 4 8 4-4 2`;
const plus = (x: number, y: number) => `M${x - 2} ${y}h5M${x} ${y - 2}v5`;
const minus = (x: number, y: number) => `M${x - 2} ${y}h5`;
const gnd = (x: number, y: number, dir = 6) => `M${x - 8} ${y}h17M${x - 4} ${y + dir}h9`;

const wires = [
  "M234 442H266", "M339 466H386", "M410 394V442", "M266 490V562", "M146 562H170", "M314 562H514", "M562 562H611",
  "M514 562V578", "M562 578V562", "M266 562V618", "M314 618V562", "M410 539V810H170", "M186 442V714H258",
  "M234 442V690H362", "M170 762H258", "M330 738H362", "M170 562V658", "M170 755V762",
].join("");

const strokes = [
  gnd(234, 334, -6), "M234 334V368M226 368h17M226 372h17M234 372V406", zigV(234, 406), "M234 430V442",
  "M154 434L162 442L154 450M162 442H198", zigH(198, 442), "M222 442H234",
  "M266 442H272V438L314 466L272 494V438M266 490H272M314 466H339M386 466H400",
  "M298 410V455M290 402L298 410L306 402M298 476V523M290 531L298 523L306 531",
  plus(291, 438), plus(278, 454), minus(278, 478), minus(291, 494),
  "M402 462L410 454V442M402 470L410 478V539M410 394V370M402 362L410 370L419 362M404 508L417 521M417 508L404 521M404 514H417",
  "M170 562H192M192 554V571M196 554V571M196 562H230", zigH(230, 562), "M254 562H278", zigH(278, 562), "M302 562H314",
  "M514 562H520c0 9 11 9 11 0c0-5-4-5-4 0c0 9 11 9 11 0c0-5-4-5-4 0c0 9 11 9 11 0c0-5-4-5-4 0c0 9 11 9 11 0c0-5-4-5-4 0c0 9 8 9 8 0H562",
  "M514 578H526", zigH(526, 578), "M550 578H562", plus(521, 556), minus(555, 557),
  "M146 562V574M146 598V622M139 588q3-6 7-1t7-2", gnd(146, 622), plus(153, 569), minus(153, 603),
  "M266 618H288M288 610V627M292 610V627M292 618H314",
  "M290 682V727M282 674L290 682L299 674M290 748V795M282 803L290 795L299 803",
  "M258 714H264V710L306 738L264 766V710M258 762H264M306 738H330",
  plus(283, 710), plus(270, 726), minus(270, 750), minus(283, 766),
  "M330 690V702", zigV(330, 702), "M330 726V738M362 690V712M354 712h17M354 716h17M362 716V738",
  "M170 658V680M162 680h17M162 684h17M170 684V718", zigV(170, 718), "M170 742V755M170 762V774", zigV(170, 774), "M170 798V810",
  "M202 762V784M194 784h17M194 788h17M202 788V810",
  "M474 562V568c-9 0-9 11 0 11c5 0 5-4 0-4c-9 0-9 11 0 11c5 0 5-4 0-4c-9 0-9 11 0 11c5 0 5-4 0-4c-9 0-9 11 0 11c5 0 5-4 0-4c-9 0-9 8 0 8V622",
  zigV(474, 622), "M474 646V670", gnd(474, 670), plus(481, 569), "M479 601v5",
  "M578 562V574", zigV(578, 574), "M578 598V622", gnd(578, 622),
].join("");

const dots = [[186, 442], [234, 442], [170, 562], [266, 562], [314, 562], [410, 562], [474, 562], [514, 562], [562, 562], [578, 562], [330, 690], [330, 738], [170, 762], [202, 762], [202, 810]];

const labels: [string, number, number][] = [
  ["C7", 246, 370], ["27p", 246, 384], ["470", 240, 414], ["R16", 241, 429], ["2k2", 201, 420], ["R10", 192, 434], ["1.65", 96, 439],
  ["25", 293, 401], ["-19", 283, 540], ["X1", 317, 488], ["X4", 414, 467], ["24", 396, 353], ["Probe1", 342, 513], ["1u", 529, 537], ["L3", 529, 551],
  ["V3", 115, 596], ["C1", 185, 586], ["20u", 178, 600], ["R12", 224, 580], ["680", 233, 594], ["R11", 272, 580], ["2k2", 273, 593],
  ["C3", 281, 642], ["8p2", 282, 656], ["25", 285, 673], ["X3", 309, 760], ["-19", 275, 812], ["R15", 298, 713], ["6k8", 299, 727],
  ["C6", 374, 714], ["1p", 374, 728], ["20u", 134, 678], ["C4", 141, 692], ["R13", 138, 729], ["680", 138, 743], ["R14", 138, 785], ["2k2", 139, 799],
  ["C5", 214, 786], ["27p", 215, 798], ["L2", 485, 596], ["0.1", 489, 611], ["R7", 484, 632], ["0.64", 484, 646], ["R17", 520, 596], ["1", 537, 610],
  ["R3", 588, 584], ["8", 588, 598], ["0", 604, 598],
];
const notes: [string, number, number, string][] = [
  ["Il", 602, 329, BLUE], ["P m", 586, 347, BLUE], ["P di", 586, 361, BLUE], ["THD", 586, 379, "#ff0000"],
  ["IMD 1.9 & 2", 530, 411, "#006000"], ["19 & 2", 571, 425, "#006000"], ["PSR", 586, 441, "#000"],
];

const Schematic = () => (
  <Canvas fontFamily={TAHOMA} fontSize="12">
    <g transform="translate(-15 -226)">
      <g transform="translate(.5 .5)" fill="none">
        <path d={wires} stroke={GREEN} shapeRendering="crispEdges" />
        <path d={strokes} stroke={BLUE} />
        <circle cx="146" cy="586" r="12" stroke={BLUE} />
        <path d="M400 454V479" stroke={BLUE} strokeWidth="3" />
        <path d="M410 479V472L404 478zM406 503h8l-4 4zM406 522h8l-4 4z" fill={BLUE} />
      </g>
      {dots.map(([x, y]) => <circle key={`${x}-${y}`} cx={x + .5} cy={y + .5} r="3.500" fill="#f00" />)}
      {labels.map(([t, x, y], i) => <text key={i} x={x} y={y} fill={GREEN}>{t}</text>)}
      {notes.map(([t, x, y, c], i) => <text key={i} x={x} y={y} fill={c} fontWeight="bold">{t}</text>)}
    </g>
  </Canvas>
);

/* ---------- plots ---------- */

const PlotText = styled.g`
  font: 11px ${ARIAL};
  fill: #0000ff;
`;
const Legend = styled.text<{ $c?: string }>`
  font-size: 10px;
  fill: ${(p) => p.$c ?? "#0000ff"};
`;
const gridLine = { stroke: "#707070", strokeDasharray: "4 3", shapeRendering: "crispEdges" as const };

const thd = [802, 795, 787, 779, 771, 763, 754, 745, 736, 727, 718, 708, 698, 688, 679, 668, 658, 648, 637, 626, 615, 604, 592, 579, 566, 552, 537, 519, 496, 461];
const thdPoints = thd.map((y, i) => [699 + i * 11.9, y]);

const ThdPlot = () => (
  <Canvas>
    <g transform="translate(-645 -198)">
      <g {...gridLine}>
        {[796, 904, 1013, 1121].map((x) => <path key={x} d={`M${x}.500 216V848`} />)}
        {[468, 721, 822].map((y) => <path key={y} d={`M689 ${y}.500H1229`} />)}
      </g>
      <rect x="688.500" y="215.500" width="541" height="633" fill="none" stroke="#808080" />
      <polyline points={thdPoints.map((p) => p.join()).join(" ")} fill="none" stroke="#0000e0" />
      {thdPoints.map(([x, y]) => <circle key={y} cx={x} cy={y} r="2.500" fill="#fff" stroke="#0000e0" />)}
      <PlotText>
        <text x="959" y="212" textAnchor="middle">THD vs POUT : F = 20K</text>
        <text x="650" y="219">10u</text><text x="650" y="472">1u</text><text x="650" y="725">100n</text><text x="650" y="826">40n</text>
        <text x="687" y="859">-7.50</text>
        {[["0.00", 796], ["7.50", 904], ["15.00", 1013], ["22.50", 1121], ["30.00", 1229]].map(([t, x]) => <text key={t} x={x} y="859" textAnchor="middle">{t}</text>)}
        <Legend x="688" y="872" textDecoration="underline">THD (%V/V)</Legend>
        <text x="906" y="885" textAnchor="middle">POUT (dBW)</text>
      </PlotText>
    </g>
  </Canvas>
);

const runs = [
  "#ff0000", "#008000", "#0000ff", "#ff00ff", "#ff8000", "#008080", "#800080", "#400080", "#30f060", "#ff0000",
  "#ff8000", "#ffff00", "#6060ff", "#ff00ff", "#800080", "#606060", "#4878a0", "#806050", "#c000a0", "#c8b820",
  "#c09848", "#a85010", "#d800b0", "#b800a0", "#ff8088", "#ff4070", "#d80050", "#c00060", "#d8a8f0", "#f080f0",
];
const L = 1325;
const DX = 53.5;
const kLabels = Array.from({ length: 10 }, (_, i) => `${(i + 1) * 20}.0K`);

const harmTop: Record<number, number[]> = {
  29: [217, 298, 298, 306, 300, 304, 304, 305, 306, 308],
  28: [218, 299, 302, 308, 304, 310, 309, 311, 313, 319],
  27: [218, 300, 304, 311, 307, 316, 314, 316, 317, 321],
  26: [219, 301, 305, 312, 309, 322, 319, 319, 318, 321],
};
const harm = (i: number) => {
  const f = i / 25;
  return harmTop[i] ?? [231 - f * 12, 322 - f * 20, 330 - f * 23, 330 - f * 17, 330 - f * 19, 331 - f * 9, 331 - f * 9, 331 - f * 9, 331 - f * 9, 331 - f * 9];
};
const thdTop: Record<number, number[]> = {
  29: [.65, .925, .94, 1.025, 1.04, 1.055, 1.06, 1.07, 1.075],
  28: [.61, .75, .755, .775, .777, .78, .785, .787, .787],
  27: [.55, .62, .625, .64, .64, .64, .64, .64, .64],
  26: [.48, .53, .535, .535, .535, .535, .535, .535, .535],
  25: [.435, .46, .465, .475, .475, .475, .475, .475, .475],
  24: [.4, .41, .41, .41, .41, .41, .41, .41, .41],
  23: [.35, .36, .36, .36, .36, .36, .36, .36, .36],
};
const thdRun = (i: number) => thdTop[i] ?? Array(9).fill(.325 / 1.1 ** (22 - i));
const line = (ys: number[], start = 1) => ys.map((y, k) => `${L + DX * (k + start)},${y}`).join(" ");
const sine = (i: number) => {
  const a = 40.5 / 1.1 ** (29 - i);
  return Array.from({ length: 61 }, (_, k) => `${L + (357 * k) / 60},${(457.5 - a * Math.sin((k * Math.PI) / 30)).toFixed(1)}`).join(" ");
};

const Plot = ({ top, bottom, ys, xs, labels: yl, left, xl, name, color, under, axis, children }: {
  top: number; bottom: number; ys: number[]; xs: number; labels: [string, number][]; left?: boolean;
  xl: string[]; name: string; color?: string; under?: boolean; axis: string; children: React.ReactNode;
}) => (
  <g>
    <g {...gridLine}>
      {Array.from({ length: Math.round(535 / xs) - 1 }, (_, k) => <path key={k} d={`M${Math.floor(L + xs * (k + 1)) + .5} ${top + 1}V${bottom}`} />)}
      {ys.map((y) => <path key={y} d={`M${L} ${y}.500H1859`} />)}
    </g>
    <rect x="1324.500" y={top + .5} width="535" height={bottom - top} fill="none" stroke="#808080" />
    <g fill="none" shapeRendering="crispEdges">{children}</g>
    <PlotText>
      {yl.map(([t, y]) => <text key={t} x={left ? 1286 : 1321} y={y + 4} textAnchor={left ? "start" : "end"}>{t}</text>)}
      <text x={L - 1} y={bottom + 11}>{xl[0]}</text>
      {xl.slice(1).map((t, k) => <text key={t} x={L + xs * (k + 1)} y={bottom + 11} textAnchor="middle">{t}</text>)}
      <Legend x={L - 1} y={bottom + 24} $c={color} textDecoration={under ? "underline" : undefined}>{name}</Legend>
      <text x="1540" y={bottom + 37} textAnchor="middle">{axis}</text>
    </PlotText>
  </g>
);

const Analysis = () => (
  <Canvas>
    <g transform="translate(-1275 -198)">
      <PlotText><text x="1592" y="212" textAnchor="middle">SE 20W source follower EC.cir F=20K VIN=.4...6.3</text></PlotText>
      <Plot top={215} bottom={335} xs={DX} left under name="HARM(V(R3))" axis="F (Hz)" xl={["0.0K", ...kLabels]}
        ys={[217, 220, 230, 240, 250, 260, 270, 280, 290, 300, 310, 320, 330]}
        labels={[["20", 217], ["1", 230], ["10m", 250], ["100u", 270], ["1u", 290], ["10n", 310], ["100p", 330]]}>
        {runs.map((c, i) => <polyline key={i} points={line(harm(i))} stroke={c} />)}
      </Plot>
      <Plot top={382} bottom={502} xs={107} name="V(R3) (V)" color="#ff2000" axis="T (Secs)"
        xl={["0.00u", "15.00u", "30.00u", "45.00u", "60.00u", "75.00u"]} ys={[406, 430, 454, 478]}
        labels={[["36.00", 382], ["24.00", 406], ["12.00", 430], ["0.00", 454], ["-12.00", 478], ["-24.00", 502]]}>
        {runs.map((c, i) => <polyline key={i} points={sine(i)} stroke={c} />)}
      </Plot>
      <Plot top={549} bottom={669} xs={DX} name="THD(HARM(V(R3))) (%)" color="#008000" axis="F (Hz)" xl={["0.0K", ...kLabels]}
        ys={[573, 597, 621, 645]}
        labels={[["1.50u", 549], ["1.20u", 573], ["0.90u", 597], ["0.60u", 621], ["0.30u", 645], ["0.00u", 669]]}>
        {runs.map((c, i) => <polyline key={i} points={line([669, ...thdRun(i).map((v) => 669 - v * 80)])} stroke={c} />)}
      </Plot>
      <Plot top={716} bottom={831} xs={DX} name="THDN(HARM(V(R3))) (%)" color="#ff00ff" axis="F (Hz)" xl={["0.0K", ...kLabels]}
        ys={[739, 762, 785, 808]}
        labels={[["750.00u", 716], ["600.00u", 739], ["450.00u", 762], ["300.00u", 785], ["150.00u", 808], ["0.00u", 831]]}>
        {runs.map((c, i) => <polyline key={i} points={line([831, ...Array(9).fill(Math.round(831 - 92 / 1.1 ** i) + .5)])} stroke={c} />)}
      </Plot>
    </g>
  </Canvas>
);

/* ---------- lower shell ---------- */

const DocTabs = styled.nav`
  display: flex;
  align-items: flex-start;
  height: 27px;
  flex: none;
  padding-left: 3px;
  border-bottom: 2px solid #a0a0a0;
  box-shadow: inset 0 -1px #fff;
`;
const DocTab = styled.button<{ $on?: boolean }>`
  height: ${(p) => (p.$on ? 21 : 19)}px;
  padding: 0 5px;
  margin-right: 1px;
  font: 11px/17px ${ARIAL};
  border: 1px solid #696969;
  border-top-width: ${(p) => (p.$on ? 0 : 1)}px;
  border-left-color: ${(p) => (p.$on ? "#fff" : "#696969")};
  border-radius: 0 0 2px 2px;
  background: #f0f0f0;
`;
const Panel = styled.section`
  display: flex;
  height: 59px;
  flex: none;
  padding: 5px 2px 4px 0;
  border-bottom: 1px solid #808080;
  textarea { flex: 1; border: 0; resize: none; outline: 0; background: #fff; padding: 0; }
`;
const Grab = styled.div`
  width: 15px;
  display: flex;
  flex-direction: column;
  align-items: center;
  gap: 4px;
  i { width: 5px; flex: 1; border: 1px solid #a0a0a0; border-width: 0 1px; }
`;
const Status = styled.footer`
  display: grid;
  grid-template-columns: 158px 1fr 278px;
  gap: 3px;
  height: 25px;
  flex: none;
  padding: 4px 0 1px;
  border-bottom: 1px solid #b0b0b0;
  font: 14px/19px ${ARIAL};
  span { border: 1px solid #a0a0a0; border-right-color: #fff; border-bottom-color: #fff; padding-left: 1px; }
`;
const Taskbar = styled.footer`
  display: flex;
  align-items: center;
  height: 47px;
  flex: none;
  background: #f3f3f3;
  padding: 0 20px 0 2px;
  font-family: ${TASK};
`;
const Start = styled.button`
  display: flex;
  align-items: center;
  gap: 3px;
  width: 71px;
  height: 37px;
  padding-left: 3px;
  border: 1px solid #fff;
  border-right: 2px solid #696969;
  border-bottom: 2px solid #696969;
  font-weight: bold;
`;
const Apps = styled.div`
  flex: 1;
  display: flex;
  justify-content: flex-end;
  align-items: center;
`;
const AppButton = styled.button<{ $run?: boolean; $on?: boolean }>`
  width: 44px;
  height: 40px;
  flex: none;
  display: grid;
  justify-items: center;
  align-content: end;
  gap: 4px;
  border-radius: 4px;
  background: ${(p) => (p.$on ? "#fdfdfd" : "none")};
  &::after {
    content: "";
    width: ${(p) => (p.$on ? 16 : 6)}px;
    height: 3px;
    border-radius: 2px;
    background: ${(p) => (p.$on ? "#00b7c7" : p.$run ? "#8a8a8a" : "transparent")};
  }
`;
const Search = styled.button`
  display: flex;
  align-items: center;
  gap: 6px;
  width: 98px;
  height: 32px;
  margin: 0 4px 0 5px;
  padding-left: 22px;
  border-radius: 16px;
  background: #f8f8f8;
  border: 1px solid #ededed;
  font-size: 11px;
  color: #666;
`;
const Tray = styled.div`
  display: flex;
  align-items: center;
  padding-left: 13px;
`;
const TrayButton = styled.button`
  width: 24px;
  height: 24px;
  display: grid;
  place-items: center;
`;
const Lang = styled.button`
  width: 49px;
  font-size: 11px;
`;
const Clock = styled.time`
  width: 63px;
  text-align: right;
  font-size: 11px;
  line-height: 16px;
  margin-right: 11px;
  white-space: nowrap;
`;

const word = (t: string, y: number, s: number, fill: string) => (
  <text x="12" y={y} fontSize={s} fontWeight="bold" textAnchor="middle" fill={fill} fontFamily="Liberation Sans">{t}</text>
);
const apps: [string, React.ReactNode][] = [
  ["Task view", <><path d="M1 5h17v18H1z" fill="#2c2c2c" /><path d="M7 1h17v15H7z" fill="#d6d6d6e0" /></>],
  ["Chat", <><path d="M12 1a11 11 0 11-4 21l-7 2 1-7A11 11 0 0112 1z" fill="#5a5cc8" /><path d="M6 8h8v8H6zM15 11l4-3v8l-4-3z" fill="#fff" /></>],
  ["Character map", <><path d="M2 16l3-11 14-2 4 12-10 6z" fill="#c9d2dc" stroke="#8a98a8" /><path d="M5 6l13-2 3 10-15 2z" fill="#eef2f6" /><text x="6" y="15" fontSize="11" fontWeight="bold" fill="#24508c">λ</text><path d="M14 6h5l-2 3v5" fill="none" stroke="#208040" strokeWidth="2" /></>],
  ["Opera", <><circle cx="12" cy="12" r="11.500" fill="#e01020" /><ellipse cx="12" cy="12" rx="5.500" ry="8.500" fill="#f3f3f3" /></>],
  ["Thunderbird", <><circle cx="12" cy="13" r="11" fill="#2a6cc0" /><path d="M3 5q-4 8 2 15 6 4 12 2-9-4-7-12z" fill="#174a90" /><path d="M5 11l12-2 2 9-9 3z" fill="#fff" /><path d="M5 11l7 4 5-6" fill="none" stroke="#9ab" /></>],
  ["Monitor", <><rect x="1" y="3" width="22" height="18" fill="#eaf2fa" stroke="#8aa4be" strokeWidth="2" /><path d="M3 17h3l2-8 2 7 3-3 2-5 2 7 4 2v3H3z" fill="#b8dcf4" stroke="#3a94d0" /></>],
  ["Library", <><path d="M2 6l9-5 11 4-7 6z" fill="#2438a0" stroke="#000" /><path d="M2 7l13 4 7-5 1 4-8 5L3 11z" fill="#101c60" /><path d="M2 12h15l5 2v4H3z" fill="#c82818" stroke="#300" /><path d="M3 18h17l2 5H4z" fill="#e84020" stroke="#300" /><path d="M5 15h12M6 21h13" stroke="#fff4" strokeWidth="2" /></>],
  ["Tasks", <><rect x="2" y="1" width="15" height="17" fill="#fff" stroke="#8a98a8" /><path d="M4 5l1 1 2-3M4 10l1 1 2-3M4 15l1 1 2-3" stroke="#2a5cd0" fill="none" strokeWidth="1.500" /><path d="M9 5h6M9 10h6" stroke="#99a" /><path d="M11 10l11-2v10l-10 1z" fill="#2a68d8" stroke="#88a" /><path d="M8 20l13-1 2 3-13 2z" fill="#555" /></>],
  ["Colours", <><circle cx="6" cy="8" r="5" fill="#b890f0" /><circle cx="11" cy="5" r="5" fill="#60d060" /><circle cx="17" cy="8" r="5.500" fill="#f4e020" /><path d="M7 11l6-1 6 5 3 8h-6l-7-5z" fill="#ddd" stroke="#555" /><path d="M16 20h7v4h-5z" fill="#111" /></>],
  ["Micro-Cap", <><circle cx="12" cy="12" r="11.500" fill="#b88818" /><circle cx="12" cy="12" r="9" fill="#70c840" stroke="#f0e080" strokeWidth="1.500" />{word("12", 17, 13, "#a01818")}</>],
  ["Equalizer", <><path d="M2 9h5M2 12h5M2 15h5" stroke="#d83020" strokeWidth="2" /><path d="M9 2h5M9 5h5M9 8h5M9 11h5" stroke="#30a030" strokeWidth="2" /><path d="M16 6h5M16 9h5M16 12h5M16 15h5" stroke="#e8b020" strokeWidth="2" /><path d="M1 22L11 9l12 13-10-3z" fill="#e4f0fa" stroke="#5a90c0" /></>],
  ["Editor", <><rect x="1" y="1" width="22" height="22" fill="#f8a0a0" stroke="#e05050" /><path d="M6 6h12v12H6z" fill="none" stroke="#300" strokeWidth="4" /><path d="M15 18l5 4" stroke="#300" strokeWidth="3" /></>],
  ["Notepad", <><rect x="3" y="2" width="18" height="20" fill="#3ab0cc" /><path d="M3 22h18" stroke="#8a4a10" strokeWidth="3" /><path d="M6 8h12M6 12h12M6 16h8" stroke="#126078" strokeWidth="2" /><path d="M5 1v3M9 1v3M13 1v3M17 1v3" stroke="#126078" strokeWidth="2" /></>],
  ["PDF", <><path d="M1 20V10q1-6 8-6h12q2 0 2 3v3H9q-5 1-5 10z" fill="#222" /><path d="M4 20q0-11 8-11h11v11z" fill="#f8d820" stroke="#222" />{word("PDF", 18, 8, "#111")}</>],
  ["Firefox", <><circle cx="12" cy="13" r="10.500" fill="#ff7818" /><path d="M12 0q10 5 9 14-2 8-9 9 8-6 3-14-4-4-3-9z" fill="#ffc020" /><path d="M2 7q0 8 7 12 8 2 8-5l-6-5z" fill="#e82858" /><circle cx="12" cy="13" r="4.500" fill="#6850d0" /></>],
  ["Paint", <><path d="M2 8Q8 1 17 4q8 5 4 12-3 3-6 1-4-1-3 3-8 2-10-6z" fill="#e89838" stroke="#a05c18" /><circle cx="16" cy="8" r="2" fill="#2050c8" /><circle cx="18" cy="13" r="2" fill="#28a028" /><circle cx="7" cy="14" r="2" fill="#d82020" /><path d="M1 1l12 14" stroke="#3a6ab0" strokeWidth="3" /><path d="M21 20h3l-2 4" fill="none" stroke="#222" /></>],
  ["XMPlay", <><rect width="24" height="24" fill="#2a3848" /><path d="M12 1l3 5h6l-2 6 3 6-6 1-4 4-4-4-6-1 3-6-2-6h6z" fill="#5890d0" />{word("XM", 12, 13, "#fff")}{word("play", 19, 8, "#fff")}</>],
  ["Vivaldi", <><rect width="24" height="24" rx="6" fill="#e83838" /><circle cx="12" cy="12" r="9.500" fill="#fff" /><path d="M7 8l5 9 5-9" fill="none" stroke="#e83838" strokeWidth="3.500" strokeLinecap="round" /></>],
  ["Excalibur", <><rect width="24" height="24" fill="#101030" /><path d="M12 2v20" stroke="#f02020" strokeWidth="2" /><path d="M1 20l4-4 2 2 3-5 2 3 2-3 3 5 2-2 4 4" fill="none" stroke="#d8c880" strokeWidth="2" /><path d="M2 3h20" stroke="#c02020" strokeDasharray="2 1" strokeWidth="2" /></>],
  ["Search files", <><path d="M3 1h14l4 4v17H3z" fill="#dfe8fa" stroke="#3048c0" strokeWidth="1.500" /><path d="M5 6h13M5 18h13" stroke="#3048c0" /><circle cx="12" cy="10" r="6" fill="#e8f4ff" stroke="#e03820" strokeWidth="3" /><path d="M16 15l6 7" stroke="#c02818" strokeWidth="4" /></>],
  ["Sound Blaster", <><rect width="24" height="24" fill="#00a8bc" /><rect x="2" y="5" width="20" height="7" fill="#e8fafa" />{word("Sound", 11, 6, "#00889c")}{word("BLASTER", 17, 4, "#fff")}{word("COMMAND", 21, 4, "#fff")}</>],
];
const tray: [string, React.ReactNode][] = [
  ["Show hidden icons", <path d="M3 10l5-5 5 5" fill="none" stroke="#222" strokeWidth="1.600" />],
  ["Globe", <><circle cx="8" cy="9" r="6.500" fill="#3a9ad0" /><path d="M1 10q6 1 10-5l3 2q-3 7-11 8z" fill="#f0a030" /><path d="M6 4l2-4 3 4z" fill="#c06018" /></>],
  ["Grey", <rect x="3" y="1" width="10" height="14" fill="#a0a0a0" stroke="#c8c8c8" />],
  ["Security", <><path d="M8 0l7 2v5q0 6-7 9-7-3-7-9V2z" fill="#2a88d8" /><circle cx="11" cy="11" r="4.500" fill="#18a048" /><path d="M9 11l2 2 3-4" fill="none" stroke="#fff" strokeWidth="1.500" /></>],
  ["USB", <path d="M5 5V1h6v4M4 5h8v10H4zM9 12l2 2 4-5" fill="none" stroke="#222" strokeWidth="1.300" />],
  ["Meter", <rect x="1.500" y="1.500" width="13" height="13" fill="#008000" stroke="#111" />],
  ["C", <path d="M13 5Q9 0 5 4q-3 4 0 9 4 3 8-2" fill="none" stroke="#d82828" strokeWidth="3.500" />],
  ["Arrow", <><path d="M1 1l8 2 6 5-6 5-8 2 4-7z" fill="#2a5ca8" stroke="#123" /><circle cx="4" cy="8" r="2.500" fill="#f08020" /><circle cx="11" cy="8" r="2.500" fill="#80d040" /></>],
  ["Sound", <><rect width="16" height="16" fill="#00a8bc" /><rect x="1" y="3" width="14" height="5" fill="#c8f0f4" /><path d="M3 11h10M3 13h10" stroke="#c8f0f4" /></>],
  ["Scottie", <><rect width="16" height="16" fill="#089808" /><path d="M3 14V8L2 4l3 1 2 3h4l2-4 1 3-1 7h-2v-3H6v3z" fill="#1c1c1c" /></>],
  ["Graphics", <><rect width="16" height="16" fill="#1c1c1c" /><path d="M2 8q5-6 10-1-5 6-10 1z" fill="none" stroke="#76b900" strokeWidth="1.500" /><circle cx="11" cy="11" r="3" fill="none" stroke="#fff" strokeWidth="1.400" /></>],
];
const system: [string, React.ReactNode][] = [
  ["Network", <><path d="M1 6q7-6 14 0M3 9q5-4 10 0M5.500 11.500q2.500-2 5 0" fill="none" stroke="#222" strokeWidth="1.300" /><circle cx="8" cy="14" r="1.200" /></>],
  ["Volume", <><path d="M1 6h3l4-4v12l-4-4H1z" fill="none" stroke="#222" strokeWidth="1.200" /><path d="M10 5q2 3 0 6" fill="none" stroke="#222" strokeWidth="1.200" /><path d="M12 3q4 5 0 10" fill="none" stroke="#aaa" strokeWidth="1.200" /></>],
  ["Battery", <><rect x="2.500" y="4.500" width="11" height="8" rx="1.500" fill="#222" stroke="#222" /><path d="M15 7v3" stroke="#222" strokeWidth="2" /><path d="M3 1v6M1 3h5" stroke="#222" strokeWidth="1.500" /></>],
];
const IconBox = styled.span` position: relative; `;
const Badge = styled.span`
  position: absolute;
  top: -6px;
  right: -5px;
  width: 16px;
  height: 16px;
  border-radius: 50%;
  background: #e81038;
  color: #fff;
  font-size: 10px;
  line-height: 16px;
`;

/* floating frequency meter that sits over the desktop */
const Meter = styled.aside`
  position: fixed;
  right: 25px;
  bottom: 78px;
  width: 120px;
  height: 120px;
  padding: 9px 7px 5px;
  border: 1px solid #00000060;
  background: #0000005c;
  display: flex;
  flex-direction: column;
  justify-content: space-between;
`;
const MeterTools = styled.div`
  display: flex;
  justify-content: flex-end;
  gap: 6px;
`;
const Reading = styled.div<{ $c: string }>`
  display: flex;
  justify-content: flex-end;
  align-items: center;
  gap: 16px;
  font: bold 17px/20px ${TASK};
  color: ${(p) => p.$c};
`;

const Logo12 = () => (
  <svg width="16" height="16" viewBox="0 0 24 24"><circle cx="12" cy="12" r="12" fill="#e8c020" /><circle cx="12" cy="12" r="9" fill="#58b828" />{word("12", 16, 12, "#a01818")}</svg>
);
const winIcons = [
  <svg key="a" width="16" height="16"><rect x=".5" y=".5" width="15" height="15" fill="#b8c8e8" stroke="#000" /><path d="M2 3h12M4 1v14M9 6h6M2 11h12M11 1v8" stroke="#0000c0" /><path d="M5 12l3-7 3 6 3-6" fill="none" stroke="#e00000" strokeWidth="1.500" /></svg>,
  <svg key="b" width="16" height="16"><rect x=".5" y=".5" width="15" height="15" fill="#fff" stroke="#000" /><path d="M0 2h16" stroke="#0000d0" strokeWidth="4" /><rect x="2.500" y="6.500" width="11" height="7" fill="#ddd" stroke="#555" /><path d="M3 12l3-3 3 1 4-2" fill="none" stroke="#f00000" strokeWidth="2" /></svg>,
  <svg key="c" width="16" height="16"><rect x=".5" y=".5" width="15" height="15" fill="#fff" stroke="#000" /><path d="M0 2h16" stroke="#0000a0" strokeWidth="4" /><rect x="4.500" y="6.500" width="9" height="7" fill="#00e0e0" stroke="#000" /><path d="M5 12q4-6 8 0" fill="none" stroke="#000" /></svg>,
];

export default function App() {
  return (
    <Shell>
      <Global />
      <AppTitle>
        <Logo12 />
        <h1>Micro-Cap 12.2.0.5 (64 bit) - C:\MC11\DATA\Audio Amplifiers\AFEC\SE 20W source follower EC.cir</h1>
        <SysButton aria-label="Minimize"><svg width="10" height="10"><path d="M0 5.500h10" stroke="#000" /></svg></SysButton>
        <SysButton aria-label="Restore"><svg width="11" height="11"><rect x=".5" y="2.500" width="8" height="8" rx="1" fill="none" stroke="#000" /><path d="M3 .5h5.500q2 0 2 2V8" fill="none" stroke="#000" /></svg></SysButton>
        <SysButton aria-label="Close"><svg width="10" height="10"><path d="M0 0l10 10M10 0L0 10" stroke="#000" /></svg></SysButton>
      </AppTitle>
      <MenuBar>
        {["File", "Edit", "Component", "Windows", "Options", "Harmonic Distortion", "Scope", "Monte Carlo", "Help"].map((m) => <button key={m}>{m}</button>)}
      </MenuBar>
      <Rebar>
        {[
          "new open save revert preview print",
          "undo redo cut copy paste del selall",
          "ground v res v cap v ind v diode v npn v mos v opamp v pulse v batt v isrc v vdep v",
          "cascade tilev tileh overlap maxi | calc",
          "panel lockgear globegear",
          "run1 run2 | checkgear step tools plotwin* | plotedit",
        ].map((b) => <Band key={b}><Tools items={b} /></Band>)}
      </Rebar>
      <Outer>
        <Mdi>
          <MdiWindow active pad={2} icon={winIcons[0]} title="C:\MC11\DATA\Audio Amplifiers\AFEC\SE 20W source follower EC.cir"
            bars={[
              "arrow* hand wave T wireo wired bus shapes v tree v pic tblk link info help web check listno rows pagepen |",
              "specA* specW* specN copycond - specV curr power ok pinconn warn cross4 grid v table pageo pageb schem | prop | group rrect rot flipx flipy | binow bino |",
              "filefwd | copy2 | editpage | bang xcirc dots | front back | goto | pageadd pagedel | zin zout z100 | slash - | up | cgrid - Ag Ab v |",
              "al1 al2 al3 al4 al5 al6",
            ]}>
            <View $edge>
              <Schematic />
              <VScroll>
                <Key label="Scroll up" d="M0 6h8L4 2z" />
                <VThumb />
                <Grow />
                <Key label="Scroll down" d="M0 2h8L4 6z" />
              </VScroll>
            </View>
            <Pages names={["Main", "Text", "Models", "Info"]}>
              <HScroll>
                <Key label="Scroll left" d="M6 0v8L2 4z" />
                <HThumb />
                <Grow />
                <Key label="Scroll right" d="M2 0v8l4-4z" />
              </HScroll>
            </Pages>
          </MdiWindow>
          <MdiWindow icon={winIcons[1]} title="Harmonic Distortion Plot:THD vs POUT : F = 20K"
            bars={[
              "arrow hand shapes v pic peak* cursor hor vert pan fx T | prop | tok1* tok2 | dots1 dots2 | v1* h1* v2 v3 | hl cr |",
              "lx ly lf lg | m0* m1 m2 m3 m4 m5 m6 m7 m8 | e1* e2* | zin zout z100 | cgrid - A Ab v | goto |",
              "front back | al1 al2 al3 al4 al5 al6",
            ]}>
            <View><ThdPlot /></View>
          </MdiWindow>
          <MdiWindow icon={winIcons[2]} title="Harmonic Distortion Analysis"
            bars={[
              "arrow hand shapes v pic peak* cursor hor vert pan fx T | prop | play stop pause | tok1 tok2 | dots1 dots2 | v1* h1* v2 v3 |",
              "hl cr | lx ly lf lr | tpen | m0* m1 m2 m3 m4 m5 m6 m7 m8 m9 m10 | pastew v | win | paste3 | e1 e2* |",
              "zin zout z100 | cgrid - A Ab v | goto | front back | al1 al2 al3 al4 al5 al6",
            ]}>
            <View><Analysis /></View>
            <Pages names={["MAIN"]} />
          </MdiWindow>
        </Mdi>
      </Outer>
      <DocTabs>
        <DocTab $on>SE 20W source follower EC.cir</DocTab>
        <DocTab>Harmonic Distortion Analysis</DocTab>
        <DocTab>THD vs POUT</DocTab>
      </DocTabs>
      <Panel>
        <Grab>
          <button aria-label="Close panel"><svg width="6" height="8"><path d="M0 1l5 6M5 1L0 7" stroke="#000" strokeWidth="1.500" /></svg></button>
          <i />
        </Grab>
        <textarea aria-label="Messages" />
      </Panel>
      <Status><span>Select Mode</span><span /><span /></Status>
      <Taskbar>
        <Start>
          <svg width="29" height="29" viewBox="0 0 24 24"><path d="M12 1q6-1 8 4 4 3 3 8l-5 5v4H6v-4l-5-5q-1-5 3-8 2-5 8-4z" fill="#f0c030" stroke="#e06818" /><path d="M12 3q8 0 9 9l-5 8H8l-5-8q1-9 9-9z" fill="#28b8d0" /><path d="M12 20V4M10 19L6 6M14 19l4-13" stroke="#1088a8" /></svg>
          Start
        </Start>
        <Apps>
          <AppButton aria-label="Windows"><svg width="24" height="24"><path d="M0 0h11v11H0z" fill="#38b8f0" /><path d="M12 0h12v11H12zM0 12h11v12H0z" fill="#1898e4" /><path d="M12 12h12v12H12z" fill="#0878d4" /></svg></AppButton>
          <Search><svg width="12" height="13"><circle cx="5" cy="5" r="4" fill="none" stroke="#666" strokeWidth="1.300" /><path d="M8 8l4 4" stroke="#666" strokeWidth="1.300" /></svg>Search</Search>
          {apps.map(([name, art], i) => (
            <AppButton key={name} $run={i > 2} $on={name === "Micro-Cap"} aria-label={name}>
              <IconBox><svg width="24" height="24" viewBox="0 0 24 24">{art}</svg>{name === "Thunderbird" && <Badge>1</Badge>}</IconBox>
            </AppButton>
          ))}
        </Apps>
        <Tray>
          {tray.map(([name, art]) => <TrayButton key={name} aria-label={name}><svg width="16" height="16">{art}</svg></TrayButton>)}
          <Lang>ENG</Lang>
          {system.map(([name, art]) => <TrayButton key={name} aria-label={name}><svg width="16" height="16">{art}</svg></TrayButton>)}
          <Clock>1:11 PM<br />2/14/2023</Clock>
          <svg width="14" height="18" viewBox="0 0 14 18"><path d="M1 14l2-3V7q0-4 4-4 3 0 4 4v4l2 3z" fill="#222" /><path d="M5 15h4v2H5z" fill="#222" /><path d="M5 7h4l-4 5h4" fill="none" stroke="#fff" strokeWidth="1.200" /><path d="M10 1h3l-3 4h3" fill="none" stroke="#222" /></svg>
        </Tray>
      </Taskbar>
      <Meter>
        <MeterTools>
          <svg width="14" height="12"><path d="M0 2h14M0 6h14M0 10h14" stroke="#e4e4e4" strokeWidth="2" /></svg>
          <svg width="14" height="12"><path d="M0 1h14L7 11z" fill="#e4e4e4" /></svg>
          <svg width="11" height="12"><path d="M1 1l9 10M10 1L1 11" stroke="#e4e4e4" strokeWidth="2.500" /></svg>
        </MeterTools>
        <div>
          <Reading $c="#ffff30"><svg width="17" height="14"><path d="M0 12h2M4 12h8v-4h-8z" fill="#c8c040" stroke="#e8e030" /><path d="M13.500 1v13M15 3h2M15 6h2" stroke="#e8e030" /></svg>15</Reading>
          <Reading $c="#66f850">840.0</Reading>
          <Reading $c="#f8ae60"><svg width="38" height="14"><path d="M0 12h14" stroke="#f09838" strokeWidth="2" /><path d="M24 12h14" stroke="#58f048" strokeWidth="2" /></svg>980.0</Reading>
        </div>
      </Meter>
    </Shell>
  );
}
